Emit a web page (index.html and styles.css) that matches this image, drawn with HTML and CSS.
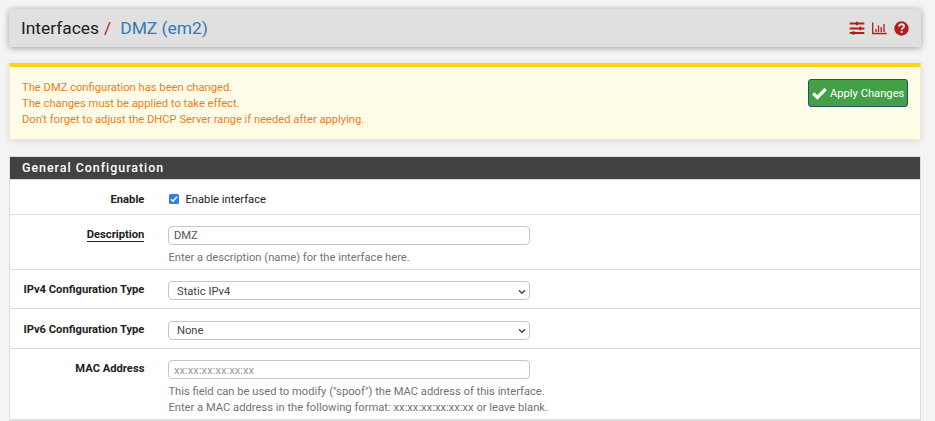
FILE: index.html
```html
<!DOCTYPE html>
<html lang="en">
<head>
<meta charset="utf-8">
<title>Interfaces / DMZ (em2)</title>
<link rel="stylesheet" href="styles.css">
</head>
<body>
<header class="header">
  <h1 class="breadcrumb"><span>Interfaces</span><span class="slash">/</span><a>DMZ (em2)</a></h1>
  <nav class="tools">
    <svg width="16" height="14" viewBox="0 0 16 14"><path d="M.7 2.5h14.6M.7 7.5h14.6M.7 12h14.6" stroke-width="1.8"/><path d="M8 .8v3.4M11.3 5.8v3.4M4.5 10.3v3.4" stroke-width="2"/></svg>
    <svg width="15" height="14" viewBox="0 0 15 14"><path d="M.7 1.5v11h14" stroke-width="1.3"/><path d="M4 8v3M6.5 4.5V11M9.2 6v5M12 3v8" stroke-width="1.3"/></svg>
    <svg width="15" height="15" viewBox="0 0 15 15"><circle class="disc" cx="7.5" cy="7.5" r="7.2"/><path class="mark" d="M5 5.5C5.3 3.9 6.2 3.3 7.5 3.3c1.5 0 2.5.8 2.5 2 0 1.6-2.3 1.7-2.3 3.4M7.7 10v2" stroke-width="2"/></svg>
  </nav>
</header>
<section class="alert">
  <p>The DMZ configuration has been changed.<br>The changes must be applied to take effect.<br>Don't forget to adjust the DHCP Server range if needed after applying.</p>
  <button class="apply"><svg width="15" height="13" viewBox="0 0 15 13"><path d="M1.3 6.4l4 4L13.7 2" stroke-width="3.2"/></svg>Apply Changes</button>
</section>
<main class="panel">
  <h2>General Configuration</h2>
  <div class="row enable">
    <span class="label">Enable</span>
    <div class="field check"><span class="box"><svg width="10" height="10" viewBox="0 0 10 10"><path d="M2 5.2l2 2 4-4.4" stroke-width="1.5"/></svg></span>Enable interface</div>
  </div>
  <div class="row description">
    <span class="label"><span class="required">Description</span></span>
    <div class="field"><div class="control">DMZ</div><p class="help">Enter a description (name) for the interface here.</p></div>
  </div>
  <div class="row ipv4">
    <span class="label">IPv4 Configuration Type</span>
    <div class="field"><div class="control select low">Static IPv4<svg width="8" height="6" viewBox="0 0 8 6"><path d="M1 1.3l3 3 3-3" stroke-width="1.4"/></svg></div></div>
  </div>
  <div class="row ipv6">
    <span class="label">IPv6 Configuration Type</span>
    <div class="field"><div class="control select">None<svg width="8" height="6" viewBox="0 0 8 6"><path d="M1 1.3l3 3 3-3" stroke-width="1.4"/></svg></div></div>
  </div>
  <div class="row mac">
    <span class="label">MAC Address</span>
    <div class="field"><div class="control placeholder low">xx:xx:xx:xx:xx:xx</div><p class="help">This field can be used to modify ("spoof") the MAC address of this interface.<br>Enter a MAC address in the following format: xx:xx:xx:xx:xx:xx or leave blank.</p></div>
  </div>
</main>
</body>
</html>
```
FILE: styles.css
```css
* { box-sizing: border-box; }
html { overflow: hidden; }
body { margin: 0; padding: 9px 14px 0 9px; height: 421px; overflow: hidden; background: #f4f4f4; color: #212121; font: 11.2px/16px Roboto, sans-serif; }
h1, h2, p { margin: 0; }
svg { fill: none; stroke: currentColor; flex: none; }
.header { display: flex; align-items: center; justify-content: space-between; height: 38px; padding: 0 12px; background: #e0e0e0; border-radius: 2px; box-shadow: 0 1px 6px rgba(0,0,0,.35); }
.breadcrumb { display: flex; font-size: 17.4px; font-weight: 400; line-height: 38px; }
.breadcrumb a { color: #337ab7; }
.slash { color: #b71c1c; margin: 0 9px 0 5px; }
.tools { display: flex; align-items: center; gap: 7px; color: #b71c1c; }
.disc { fill: currentColor; stroke: none; }
.mark { stroke: #e0e0e0; }
.alert { display: flex; justify-content: space-between; align-items: flex-start; height: 77px; margin-top: 16px; padding: 13px 13px 0 12px; background: #fffde7; border: 1px solid #f8edc5; border-top: 4px solid #f9d31c; color: #ef7c1a; box-shadow: 0 1px 6px rgba(0,0,0,.12); }
.apply { display: flex; align-items: center; gap: 3px; width: 100px; height: 28px; margin: -1px -1px 0 0; padding: 1px 3px 0; background: #43a047; border: 1px solid #1f5368; border-radius: 3px; color: #fff; font: inherit; white-space: nowrap; }
.panel { margin-top: 16px; background: #fff; border: 1px solid #ddd; }
.panel h2 { height: 23px; padding-left: 12px; background: #424242; border-bottom: 1px solid #ddd; color: #fff; font-size: 12.4px; font-weight: 500; line-height: 22px; letter-spacing: 1px; }
.row { display: grid; grid-template-columns: 134.4px 1fr; column-gap: 23.6px; border-bottom: 1px solid #ddd; }
.enable { height: 35px; padding-top: 12px; }
.description { height: 55px; padding-top: 11px; }
.ipv4 { height: 39px; padding-top: 11px; }
.ipv6 { height: 40px; padding-top: 12px; }
.mac { height: 71px; padding-top: 11px; }
.label { text-align: right; font-weight: 700; padding-top: 1px; }
.enable .label { padding-top: 0; }
.required { display: inline-block; height: 15px; border-bottom: 1px solid #212121; }
.check { display: flex; align-items: center; height: 16px; gap: 6.5px; padding-left: 1px; }
.box { display: flex; width: 10px; height: 10px; margin-top: -2px; border-radius: 1.5px; background: #2f7ee0; color: #fff; }
.control { display: flex; align-items: center; width: 362px; height: 19px; padding: 0 5px; border: 1px solid #c6c6c6; border-radius: 4px; color: #555; }
.select { justify-content: space-between; padding: 0 3px 0 8px; color: #444; }
.low { padding-top: 2px; }
.placeholder { color: #999; }
.help { margin-top: 5px; padding-left: .4px; color: #737373; white-space: nowrap; }
```
